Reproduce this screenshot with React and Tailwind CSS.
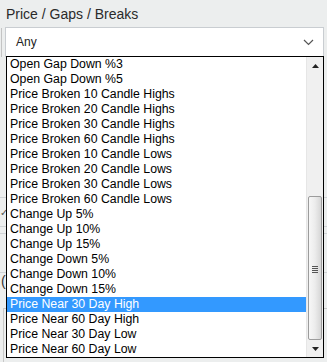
import React from 'react';

const OPTIONS = [
    'Open Gap Down %3',
    'Open Gap Down %5',
    'Price Broken 10 Candle Highs',
    'Price Broken 20 Candle Highs',
    'Price Broken 30 Candle Highs',
    'Price Broken 60 Candle Highs',
    'Price Broken 10 Candle Lows',
    'Price Broken 20 Candle Lows',
    'Price Broken 30 Candle Lows',
    'Price Broken 60 Candle Lows',
    'Change Up 5%',
    'Change Up 10%',
    'Change Up 15%',
    'Change Down 5%',
    'Change Down 10%',
    'Change Down 15%',
    'Price Near 30 Day High',
    'Price Near 60 Day High',
    'Price Near 30 Day Low',
    'Price Near 60 Day Low',
];

const SELECTED = 'Price Near 30 Day High';

function Chevron() {
    return (
        <svg width="11" height="7" viewBox="0 0 11 7" fill="none">
            <path d="M1 1l4.5 4.5L10 1" stroke="#555" strokeWidth="1.2" />
        </svg>
    );
}

function Arrow({ down }) {
    return (
        <svg width="7" height="4" viewBox="0 0 7 4">
            <path d={down ? 'M0 0h7L3.5 4z' : 'M0 4h7L3.5 0z'} fill="#222" />
        </svg>
    );
}

function Scrollbar() {
    return (
        <div className="w-[17px] h-full flex flex-col bg-[#f0f0f0] border-l border-[#e6e6e6]">
            <div className="h-[17px] flex items-center justify-center">
                <Arrow />
            </div>
            <div className="h-[122px]" />
            <div className="h-[144px] mx-[1px] rounded-[2px] border border-[#9c9c9c] bg-gradient-to-r from-[#f7f7f7] via-[#ececec] to-[#d6d6d6] flex items-center justify-center">
                <div className="flex flex-col gap-[1px] mt-[2px]">
                    <div className="w-[6px] h-[1px] bg-[#555]" />
                    <div className="w-[6px] h-[1px] bg-[#555]" />
                    <div className="w-[6px] h-[1px] bg-[#555]" />
                    <div className="w-[6px] h-[1px] bg-[#555]" />
                </div>
            </div>
            <div className="flex-1 flex items-center justify-center">
                <Arrow down />
            </div>
        </div>
    );
}

export default function App() {
    return (
        <div className="relative w-[327px] h-[362px] overflow-hidden bg-[#eceeee] font-['Liberation_Sans',Arial,sans-serif]">
            <div className="pl-[6px] pt-[6px] h-[27px] text-[14px] leading-[16px] text-[#2a2a2a]">
                Price / Gaps / Breaks
            </div>

            <div className="flex">
                <div className="w-[2px] ml-[1px] border-l border-[#c4c4c4] h-[29px] mt-[1px]" />
                <div className="ml-[2px] w-[319px] h-[30px] border border-[#c9cdd1] bg-white flex items-center justify-between pl-[10px] pr-[9px]">
                    <span className="text-[12px] text-[#222]">Any</span>
                    <Chevron />
                </div>
            </div>

            {/* content behind the open list */}
            <div className="flex flex-col text-[12px] text-[#333]">
                <div className="h-[140px]" />
                <div className="h-[29px] border-t border-[#cfd3d6] flex items-center text-[#555] text-[10px]">✓</div>
                <div className="h-[7px] border-t border-[#cfd3d6]" />
                <div className="h-[39px] border-t border-[#cfd3d6]" />
                <div className="h-[36px] border-t border-[#cfd3d6] flex items-start pl-[1px] text-[14px] leading-[16px]">(</div>
                <div className="ml-[3px] h-[60px] border-l border-t border-[#c8c8c8] pt-[56px] pl-[8px] whitespace-nowrap">
                    Day's range: 0.00 – 0.00 for 1.1.00
                </div>
            </div>

            {/* open dropdown list */}
            <div className="absolute left-[6px] top-[56px] w-[318px] h-[302px] border border-black bg-white flex">
                <div className="flex-1 flex flex-col">
                    {OPTIONS.map(opt => (
                        <div
                            key={opt}
                            className={
                                'h-[15px] pl-[3px] text-[12.3px] leading-[15px] whitespace-nowrap ' +
                                (opt === SELECTED ? 'bg-[#3399ff] text-white' : 'text-black')
                            }
                        >
                            {opt}
                        </div>
                    ))}
                </div>
                <Scrollbar />
            </div>
        </div>
    );
}
